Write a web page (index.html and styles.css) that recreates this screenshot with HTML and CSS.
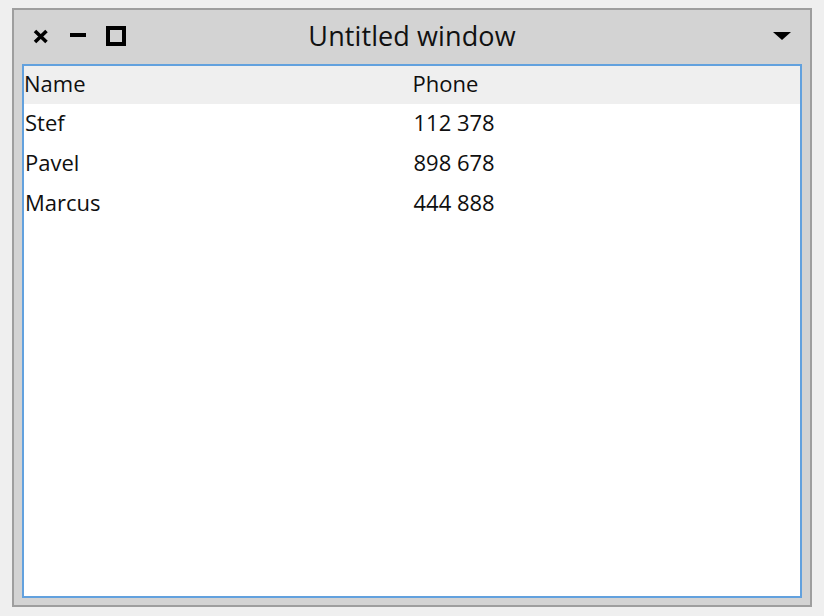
FILE: index.html
```html
<!DOCTYPE html>
<html>
<head>
<meta charset="utf-8">
<link rel="stylesheet" href="styles.css">
</head>
<body>
<div class="window">
  <div class="titlebar">
    <div class="tb-left">
      <svg class="win-buttons" width="94" height="20" viewBox="0 0 94 20">
        <path d="M2 5 L13.5 16 M13.5 5 L2 16" stroke="#000" stroke-width="3.6" fill="none"/>
        <rect x="37" y="7" width="16" height="4" fill="#000"/>
        <rect x="75" y="2" width="16" height="16" stroke="#000" stroke-width="4" fill="none"/>
      </svg>
    </div>
    <div class="title">Untitled window</div>
    <div class="tb-right">
      <svg class="menu-arrow" width="18" height="8" viewBox="0 0 18 8">
        <polygon points="0,0 18,0 9,8" fill="#000"/>
      </svg>
    </div>
  </div>
  <div class="table">
    <div class="row header">
      <div class="cell">Name</div>
      <div class="cell">Phone</div>
    </div>
    <div class="row">
      <div class="cell first">Stef</div>
      <div class="cell num">112 378</div>
    </div>
    <div class="row">
      <div class="cell first">Pavel</div>
      <div class="cell num">898 678</div>
    </div>
    <div class="row">
      <div class="cell first">Marcus</div>
      <div class="cell num">444 888</div>
    </div>
  </div>
</div>
</body>
</html>
```
FILE: styles.css
```css
html, body {
  margin: 0;
  padding: 0;
  background: #efefef;
  width: 824px;
  height: 616px;
  overflow: hidden;
}
body {
  padding: 8px 0 0 12px;
  box-sizing: border-box;
  font-family: "Open Sans", "Noto Sans", sans-serif;
  color: #0f0f0f;
}
.window {
  width: 800px;
  height: 599px;
  box-sizing: border-box;
  border: 2px solid #9e9e9e;
  background: #d3d3d3;
  padding: 0 8px 7px 8px;
  display: flex;
  flex-direction: column;
}
.titlebar {
  height: 54px;
  display: flex;
  align-items: stretch;
  margin: 0 -8px;
}
.tb-left {
  flex: 1;
  display: flex;
  align-items: flex-start;
  padding-left: 19px;
  padding-top: 16px;
}
.tb-right {
  flex: 1;
  display: flex;
  justify-content: flex-end;
  align-items: flex-start;
  padding-right: 19px;
  padding-top: 22px;
}
.win-buttons, .menu-arrow {
  display: block;
}
.title {
  font-size: 27px;
  line-height: 52px;
  color: #111;
  white-space: nowrap;
  letter-spacing: 0.1px;
}
.table {
  flex: 1;
  border: 2px solid #62a1de;
  background: #fff;
}
.row {
  display: flex;
  height: 40px;
  font-size: 22px;
  line-height: 36px;
}
.row.header {
  background: #efefef;
  height: 38px;
  line-height: 34px;
}
.cell {
  flex: 1;
  padding-left: 0;
  white-space: nowrap;
}
.cell.first {
  padding-left: 1px;
}
.cell.num {
  padding-left: 2px;
}
.row.header .cell + .cell {
  padding-left: 1px;
}
```
